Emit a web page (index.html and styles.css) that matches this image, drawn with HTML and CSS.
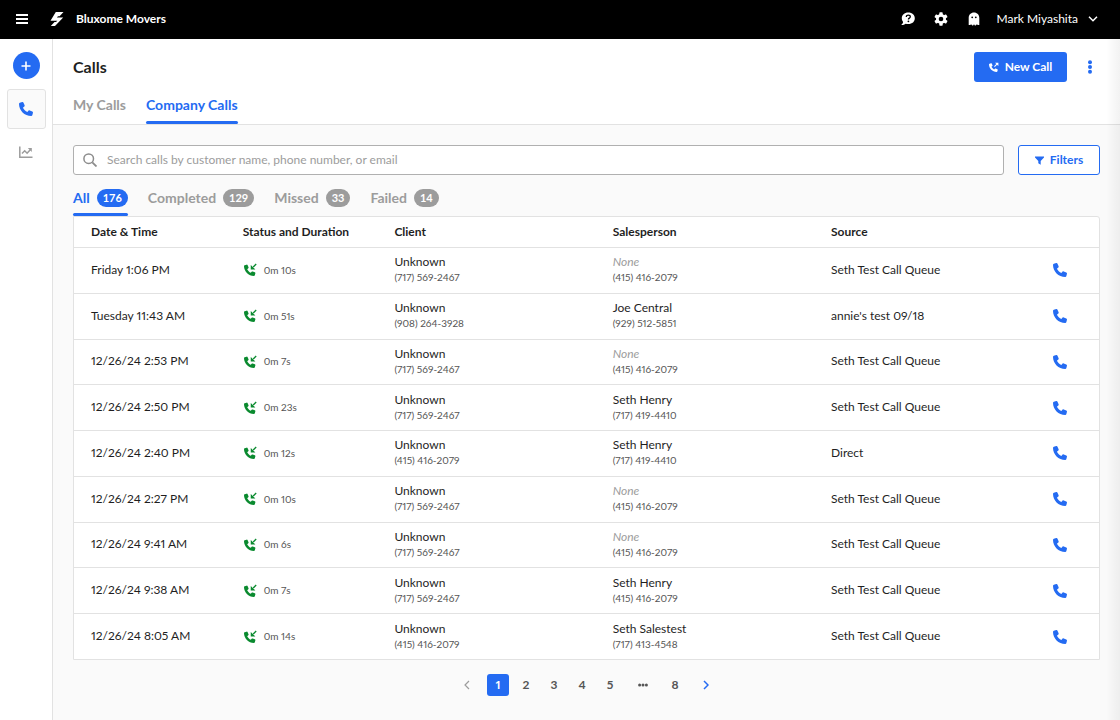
FILE: index.html
```html
<!DOCTYPE html>
<html lang="en">
<head>
<meta charset="utf-8">
<meta name="viewport" content="width=device-width, initial-scale=1">
<title>Calls</title>
<link rel="stylesheet" href="styles.css">
</head>
<body>
<svg class="sprite" aria-hidden="true">
  <symbol id="phone" viewBox="0 0 512 512"><path d="M164.9 24.6c-7.7-18.6-28-28.5-47.4-23.2l-88 24C12.1 30.2 0 46 0 64C0 311.4 200.6 512 448 512c18 0 33.8-12.1 38.6-29.5l24-88c5.3-19.4-4.6-39.7-23.2-47.4l-96-40c-16.3-6.8-35.2-2.1-46.3 11.6L304.7 368C234.3 334.7 177.3 277.7 144 207.3L193.3 167c13.7-11.2 18.4-30 11.6-46.3l-40-96z" fill="currentColor"/></symbol>
  <symbol id="incoming" viewBox="0 0 24 24"><path transform="translate(0 3) scale(.041)" d="M164.9 24.6c-7.7-18.6-28-28.5-47.4-23.2l-88 24C12.1 30.2 0 46 0 64C0 311.4 200.6 512 448 512c18 0 33.8-12.1 38.6-29.5l24-88c5.3-19.4-4.6-39.7-23.2-47.4l-96-40c-16.3-6.8-35.2-2.1-46.3 11.6L304.7 368C234.3 334.7 177.3 277.7 144 207.3L193.3 167c13.7-11.2 18.4-30 11.6-46.3l-40-96z" fill="currentColor"/><path d="M22.500 2 17 7.500" fill="none" stroke="currentColor" stroke-width="2.400"/><path d="M12.500 3.500v8.500h8.500z" fill="currentColor"/></symbol>
  <symbol id="outgoing" viewBox="0 0 24 24"><path transform="translate(0 3) scale(.041)" d="M164.900 24.600c-7.700-18.600-28-28.500-47.400-23.200l-88 24C12.100 30.200 0 46 0 64C0 311.400 200.600 512 448 512c18 0 33.800-12.100 38.600-29.500l24-88c5.300-19.400-4.600-39.700-23.200-47.400l-96-40c-16.300-6.800-35.200-2.100-46.300 11.600L304.700 368C234.300 334.700 177.300 277.700 144 207.300L193.300 167c13.700-11.200 18.400-30 11.600-46.300l-40-96z" fill="currentColor"/><path d="M13 11 19 5" fill="none" stroke="currentColor" stroke-width="2.600"/><path d="M14.500 1.500h8v8z" fill="currentColor"/></symbol>
</svg>

<header class="topbar">
  <button class="icon-button menu-button" aria-label="Menu"><svg width="12" height="12" viewBox="0 0 12 12"><path d="M0 2h12M0 6h12M0 10h12" stroke="currentColor" stroke-width="2"/></svg></button>
  <svg class="logo" width="14" height="14" viewBox="0 0 14 14" aria-hidden="true"><path d="M5.800 0h7.700L9.600 4.300H8L6.900 5.500h6.300L5 14H.8l3.700-4H6l1.300-1.300H.5z" fill="currentColor"/></svg>
  <span class="company">Bluxome Movers</span>
  <nav class="topbar-tools" aria-label="Account">
    <button class="icon-button" aria-label="Help"><svg width="14" height="14" viewBox="0 0 14 14"><path d="M7.300.5C3.400.5.800 3 .800 6.300c0 1.500.5 2.700 1.300 3.600C2 11 1.300 12 .2 13c1.900.1 3.400-.5 4.400-1.300.9.300 1.700.4 2.700.4 4 0 6.500-2.500 6.500-5.800S11.300.5 7.300.5z" fill="currentColor"/><path d="M5.300 5c0-1.300.9-1.900 2-1.900s2 .7 2 1.700c0 1.400-1.900 1.300-1.900 2.600" fill="none" stroke="#000" stroke-width="1.300"/><circle cx="7.400" cy="9.300" r=".9" fill="#000"/></svg></button>
    <button class="icon-button" aria-label="Settings"><svg width="14" height="14" viewBox="0 0 14 14"><g fill="currentColor"><circle cx="7" cy="7" r="5"/><rect x="5.300" y=".3" width="3.400" height="13.400" rx=".7"/><rect x="5.300" y=".3" width="3.400" height="13.400" rx=".7" transform="rotate(60 7 7)"/><rect x="5.300" y=".3" width="3.400" height="13.400" rx=".7" transform="rotate(120 7 7)"/></g><circle cx="7" cy="7" r="2.300" fill="#000"/></svg></button>
    <button class="icon-button" aria-label="Impersonate"><svg width="14" height="14" viewBox="0 0 14 14"><path d="M7 .5C3.900.5 1.700 2.900 1.700 5.800v7.300h1.500l.9-.8 1.200 1.200h.8L7 12.300l.9 1.200h.8l1.200-1.200.9.800h1.500V5.800C12.300 2.900 10.100.5 7 .5z" fill="currentColor"/><circle cx="5.200" cy="5.300" r=".9" fill="#000"/><circle cx="8.800" cy="5.300" r=".9" fill="#000"/></svg></button>
    <button class="user-menu">Mark Miyashita <svg width="10" height="6" viewBox="0 0 10 6"><path d="m1 .8 4 4 4-4" fill="none" stroke="currentColor" stroke-width="1.500"/></svg></button>
  </nav>
</header>

<div class="shell">
  <nav class="sidebar" aria-label="Main">
    <button class="add-button" aria-label="Add"><svg width="10" height="10" viewBox="0 0 10 10"><path d="M5 .5v9M.5 5h9" stroke="currentColor" stroke-width="1.600"/></svg></button>
    <a class="side-link side-link-active" href="#" aria-label="Calls"><svg width="14" height="14"><use href="#phone"/></svg></a>
    <a class="side-link" href="#" aria-label="Reports"><svg width="14" height="12" viewBox="0 0 14 12"><path d="M.8.500v10.700H13.500M3 7.500l2.700-2.700 2.400 2.400L11.500 3.500" fill="none" stroke="currentColor" stroke-width="1.500"/><path d="M8.800 2h4v4z" fill="currentColor"/></svg></a>
  </nav>

  <main class="main">
    <div class="page-header">
      <div class="title-row">
        <h1 class="title">Calls</h1>
        <button class="primary-button"><svg width="10" height="10"><use href="#outgoing"/></svg>New Call</button>
        <button class="more-button" aria-label="More"><svg width="4" height="14" viewBox="0 0 4 14"><g fill="currentColor"><circle cx="2" cy="2.200" r="2"/><circle cx="2" cy="7" r="2"/><circle cx="2" cy="11.800" r="2"/></g></svg></button>
      </div>
      <nav class="tabs" aria-label="Call scope">
        <a class="tab" href="#">My Calls</a>
        <a class="tab tab-active" href="#">Company Calls</a>
      </nav>
    </div>

    <div class="content">
      <div class="search-row">
        <label class="search"><svg width="14" height="14" viewBox="0 0 14 14" aria-hidden="true"><circle cx="5.700" cy="5.700" r="4.800" fill="none" stroke="currentColor" stroke-width="1.500"/><path d="m9.300 9.300 4.200 4.200" stroke="currentColor" stroke-width="1.800"/></svg><input class="search-input" type="search" aria-label="Search calls" placeholder="Search calls by customer name, phone number, or email"></label>
        <button class="outline-button"><svg width="9" height="9" viewBox="0 0 9 9"><path d="M0 .5h9v1L5.700 5v3.700L3.300 7.300V5L0 1.500z" fill="currentColor"/></svg>Filters</button>
      </div>

      <nav class="status-tabs" aria-label="Call status">
        <a class="status-tab status-tab-active" href="#">All <span class="count">176</span></a>
        <a class="status-tab" href="#">Completed <span class="count">129</span></a>
        <a class="status-tab" href="#">Missed <span class="count">33</span></a>
        <a class="status-tab" href="#">Failed <span class="count">14</span></a>
      </nav>

      <div class="table-card">
        <table class="calls">
          <colgroup><col class="col-date"><col class="col-status"><col class="col-person"><col class="col-person"><col class="col-source"><col></colgroup>
          <thead><tr><th scope="col">Date &amp; Time</th><th scope="col">Status and Duration</th><th scope="col">Client</th><th scope="col">Salesperson</th><th scope="col">Source</th><td></td></tr></thead>
          <tbody>
            <tr><td>Friday 1:06 PM</td><td><span class="duration"><svg class="status-icon"><use href="#incoming"/></svg>0m 10s</span></td><td>Unknown<span class="number">(717) 569-2467</span></td><td><em class="none">None</em><span class="number">(415) 416-2079</span></td><td>Seth Test Call Queue</td><td class="action"><button class="call-button" aria-label="Call"><svg width="14" height="14"><use href="#phone"/></svg></button></td></tr>
            <tr><td>Tuesday 11:43 AM</td><td><span class="duration"><svg class="status-icon"><use href="#incoming"/></svg>0m 51s</span></td><td>Unknown<span class="number">(908) 264-3928</span></td><td>Joe Central<span class="number">(929) 512-5851</span></td><td>annie's test 09/18</td><td class="action"><button class="call-button" aria-label="Call"><svg width="14" height="14"><use href="#phone"/></svg></button></td></tr>
            <tr><td>12/26/24 2:53 PM</td><td><span class="duration"><svg class="status-icon"><use href="#incoming"/></svg>0m 7s</span></td><td>Unknown<span class="number">(717) 569-2467</span></td><td><em class="none">None</em><span class="number">(415) 416-2079</span></td><td>Seth Test Call Queue</td><td class="action"><button class="call-button" aria-label="Call"><svg width="14" height="14"><use href="#phone"/></svg></button></td></tr>
            <tr><td>12/26/24 2:50 PM</td><td><span class="duration"><svg class="status-icon"><use href="#incoming"/></svg>0m 23s</span></td><td>Unknown<span class="number">(717) 569-2467</span></td><td>Seth Henry<span class="number">(717) 419-4410</span></td><td>Seth Test Call Queue</td><td class="action"><button class="call-button" aria-label="Call"><svg width="14" height="14"><use href="#phone"/></svg></button></td></tr>
            <tr><td>12/26/24 2:40 PM</td><td><span class="duration"><svg class="status-icon"><use href="#incoming"/></svg>0m 12s</span></td><td>Unknown<span class="number">(415) 416-2079</span></td><td>Seth Henry<span class="number">(717) 419-4410</span></td><td>Direct</td><td class="action"><button class="call-button" aria-label="Call"><svg width="14" height="14"><use href="#phone"/></svg></button></td></tr>
            <tr><td>12/26/24 2:27 PM</td><td><span class="duration"><svg class="status-icon"><use href="#incoming"/></svg>0m 10s</span></td><td>Unknown<span class="number">(717) 569-2467</span></td><td><em class="none">None</em><span class="number">(415) 416-2079</span></td><td>Seth Test Call Queue</td><td class="action"><button class="call-button" aria-label="Call"><svg width="14" height="14"><use href="#phone"/></svg></button></td></tr>
            <tr><td>12/26/24 9:41 AM</td><td><span class="duration"><svg class="status-icon"><use href="#incoming"/></svg>0m 6s</span></td><td>Unknown<span class="number">(717) 569-2467</span></td><td><em class="none">None</em><span class="number">(415) 416-2079</span></td><td>Seth Test Call Queue</td><td class="action"><button class="call-button" aria-label="Call"><svg width="14" height="14"><use href="#phone"/></svg></button></td></tr>
            <tr><td>12/26/24 9:38 AM</td><td><span class="duration"><svg class="status-icon"><use href="#incoming"/></svg>0m 7s</span></td><td>Unknown<span class="number">(717) 569-2467</span></td><td>Seth Henry<span class="number">(415) 416-2079</span></td><td>Seth Test Call Queue</td><td class="action"><button class="call-button" aria-label="Call"><svg width="14" height="14"><use href="#phone"/></svg></button></td></tr>
            <tr><td>12/26/24 8:05 AM</td><td><span class="duration"><svg class="status-icon"><use href="#incoming"/></svg>0m 14s</span></td><td>Unknown<span class="number">(415) 416-2079</span></td><td>Seth Salestest<span class="number">(717) 413-4548</span></td><td>Seth Test Call Queue</td><td class="action"><button class="call-button" aria-label="Call"><svg width="14" height="14"><use href="#phone"/></svg></button></td></tr>
          </tbody>
        </table>
      </div>

      <nav class="pagination" aria-label="Pages">
        <button class="page-button page-previous" aria-label="Previous page"><svg width="6" height="10" viewBox="0 0 6 10"><path d="M5 1 1 5l4 4" fill="none" stroke="currentColor" stroke-width="1.200"/></svg></button>
        <button class="page-button page-current" aria-current="page">1</button>
        <button class="page-button">2</button>
        <button class="page-button">3</button>
        <button class="page-button">4</button>
        <button class="page-button">5</button>
        <span class="page-gap" aria-label="More pages"><svg width="10" height="4" viewBox="0 0 10 4"><g fill="currentColor"><circle cx="1.600" cy="2" r="1.500"/><circle cx="5" cy="2" r="1.500"/><circle cx="8.400" cy="2" r="1.500"/></g></svg></span>
        <button class="page-button">8</button>
        <button class="page-button page-next" aria-label="Next page"><svg width="6" height="10" viewBox="0 0 6 10"><path d="m1 1 4 4-4 4" fill="none" stroke="currentColor" stroke-width="1.500"/></svg></button>
      </nav>
    </div>
  </main>
</div>
</body>
</html>
```
FILE: styles.css
```css
:root {
  --blue: #246bf2;
  --grey: #9c9c9c;
  --line: #e2e2e2;
  --ink: #1f1f1f;
}

* { box-sizing: border-box; }

body {
  margin: 0;
  min-height: 100vh;
  display: flex;
  flex-direction: column;
  font-family: Lato, "Noto Sans", sans-serif;
  font-size: 12px;
  line-height: 16px;
  font-variant-numeric: proportional-nums;
  color: var(--ink);
  background: #fafafa;
}

button {
  margin: 0;
  padding: 0;
  border: 0;
  background: none;
  color: inherit;
  font: inherit;
  cursor: pointer;
}

a { color: inherit; text-decoration: none; }
svg { display: block; flex: none; }
.sprite { position: absolute; width: 0; height: 0; }

.topbar {
  display: flex;
  align-items: center;
  height: 39px;
  padding: 0 22px 1px 16px;
  color: #fff;
  background: #000;
}

.logo { margin: 0 12px 0 22px; }
.company { font-weight: 700; }
.topbar-tools { display: flex; align-items: center; gap: 19px; margin-left: auto; }
.user-menu { display: flex; align-items: center; gap: 10px; margin-left: -3px; }

.shell { display: flex; flex: 1; }

.sidebar {
  display: flex;
  flex-direction: column;
  align-items: center;
  gap: 10px;
  width: 53px;
  padding-top: 13px;
  border-right: 1px solid var(--line);
  background: #fff;
}

.add-button {
  display: grid;
  place-items: center;
  width: 27px;
  height: 27px;
  border-radius: 50%;
  color: #fff;
  background: var(--blue);
}

.side-link {
  display: grid;
  place-items: center;
  width: 39px;
  height: 40px;
  color: var(--grey);
}

.side-link + .side-link { height: 26px; }

.side-link-active {
  border: 1px solid var(--line);
  border-radius: 3px;
  color: var(--blue);
  background: #fafafa;
}

.main { display: flex; flex: 1; flex-direction: column; min-width: 0; position: relative; }

.main::after {
  content: "";
  position: absolute;
  inset: 0 0 0 auto;
  width: 14px;
  background: linear-gradient(to right, rgba(0, 0, 0, 0), rgba(0, 0, 0, .05));
  pointer-events: none;
}

.page-header {
  padding: 13px 20px 0;
  border-bottom: 1px solid var(--line);
  background: #fff;
}

.title-row { display: flex; align-items: center; gap: 13px; height: 30px; }
.title { margin: 0 auto 0 0; font-size: 16px; line-height: 20px; font-weight: 700; }

.primary-button,
.outline-button {
  display: flex;
  align-items: center;
  justify-content: center;
  gap: 6px;
  height: 30px;
  border-radius: 3px;
  font-weight: 700;
}

.primary-button { min-width: 93px; color: #fff; background: var(--blue); }
.more-button { display: grid; place-items: center; width: 20px; height: 30px; color: var(--blue); }

.tabs { display: flex; gap: 20px; margin-top: 13px; }

.tab {
  height: 29px;
  padding-top: 1px;
  color: var(--grey);
  font-size: 14px;
  line-height: 18px;
  font-weight: 700;
}

.tab-active,
.status-tab-active { position: relative; color: var(--blue); }

.tab-active::after,
.status-tab-active::after {
  content: "";
  position: absolute;
  inset: auto 0 0;
  height: 3px;
  border-radius: 2px;
  background: var(--blue);
}

.content { display: flex; flex: 1; flex-direction: column; padding: 20px 20px 24px; }
.search-row { display: flex; gap: 14px; }

.search {
  display: flex;
  flex: 1;
  align-items: center;
  gap: 10px;
  height: 30px;
  padding: 0 9px;
  border: 1px solid #b0b0b0;
  border-radius: 3px;
  color: #8c8c8c;
  background: #fff;
}

.search-input {
  flex: 1;
  min-width: 0;
  padding: 0 0 1px;
  border: 0;
  outline: 0;
  color: var(--ink);
  background: none;
  font: inherit;
}

.search-input::placeholder { color: var(--grey); opacity: 1; }
.outline-button { min-width: 82px; border: 1px solid var(--blue); color: var(--blue); background: #fff; }

.status-tabs { display: flex; gap: 20px; margin-top: 13px; }

.status-tab {
  display: flex;
  align-items: flex-start;
  gap: 7px;
  height: 28px;
  color: var(--grey);
  font-size: 14px;
  line-height: 20px;
  font-weight: 700;
}

.status-tab-active { color: var(--blue); }

.count {
  height: 18px;
  margin-top: 1px;
  padding: 0 6px;
  border-radius: 9px;
  color: #fff;
  background: var(--grey);
  font-size: 11px;
  line-height: 18px;
  font-variant-numeric: normal;
}

.status-tab-active .count { background: var(--blue); }

.table-card {
  display: flex;
  flex: 1;
  flex-direction: column;
  border: 1px solid var(--line);
  border-radius: 0 3px 0 0;
  background: #fff;
}

.calls { flex: 1; width: 100%; border-spacing: 0; table-layout: fixed; text-align: left; }
.calls th, .calls td { padding: 0 0 1px 17px; }
.calls thead tr { height: 30px; }
.calls tbody td { border-top: 1px solid var(--line); }
.calls th { font-weight: 700; }
.col-date, .col-status { width: 14.8%; }
.col-person { width: 21.3%; }
.col-source { width: 20%; }

.duration { display: flex; align-items: center; gap: 7px; padding-left: 1px; color: #555; font-size: 10px; }
.status-icon { width: 13px; height: 13px; color: #0a8a2f; }
.number { display: block; color: #555; font-size: 10px; line-height: 15px; }
.none { color: var(--grey); }
.calls .action { padding: 0 32px 0 0; }
.call-button { display: block; margin-left: auto; color: var(--blue); }

.pagination { display: flex; justify-content: center; align-items: center; gap: 6px; padding-top: 14px; }

.page-button {
  display: grid;
  place-items: center;
  width: 22px;
  height: 22px;
  border-radius: 3px;
  color: #555;
  font-weight: 700;
}

.page-current { color: #fff; background: var(--blue); }
.page-previous { color: var(--grey); margin-right: 3px; }
.page-next { color: var(--blue); margin-left: 3px; }
.page-gap { display: grid; place-items: center; width: 31px; color: #555; }
```
